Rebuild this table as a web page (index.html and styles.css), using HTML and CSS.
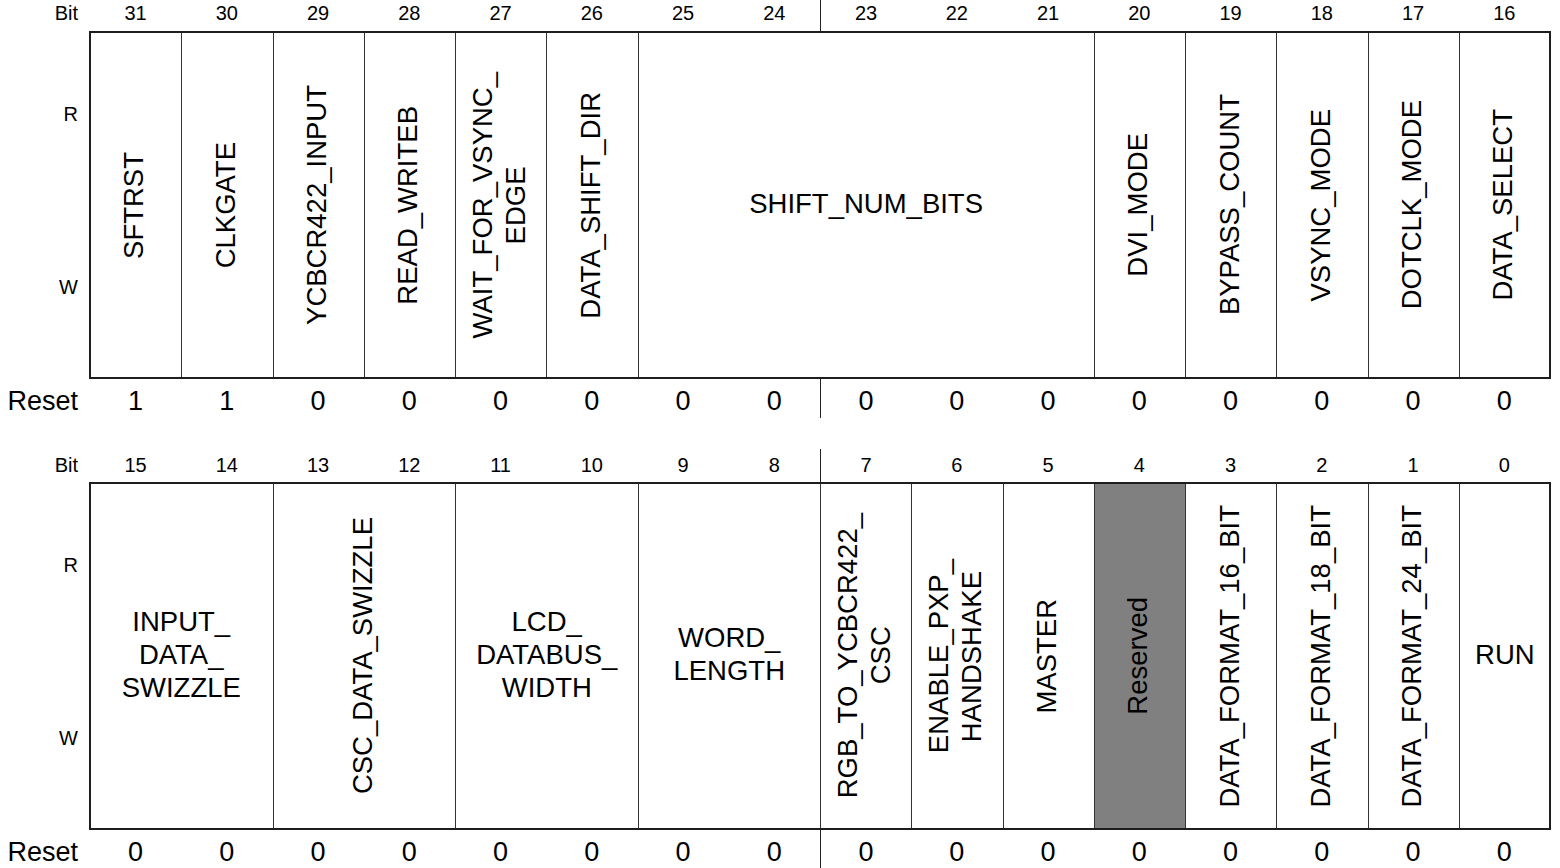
FILE: index.html
```html
<!DOCTYPE html>
<html>
<head>
<meta charset="utf-8">
<link rel="stylesheet" href="styles.css">
</head>
<body>
<div class="page">
  <section class="reg reg-hi">
    <div class="row bits">
      <div class="lbl">Bit</div>
      <div class="cols">
        <span>31</span><span>30</span><span>29</span><span>28</span><span>27</span><span>26</span><span>25</span><span>24</span>
        <span class="div">23</span><span>22</span><span>21</span><span>20</span><span>19</span><span>18</span><span>17</span><span>16</span>
      </div>
    </div>
    <div class="row body">
      <div class="lbl rw"><span>R</span><span>W</span></div>
      <div class="box">
        <div class="f s1"><span class="v">SFTRST</span></div>
        <div class="f s1"><span class="v">CLKGATE</span></div>
        <div class="f s1"><span class="v">YCBCR422_INPUT</span></div>
        <div class="f s1"><span class="v">READ_WRITEB</span></div>
        <div class="f s1"><span class="v">WAIT_FOR_VSYNC_<br>EDGE</span></div>
        <div class="f s1"><span class="v">DATA_SHIFT_DIR</span></div>
        <div class="f s5"><span class="h">SHIFT_NUM_BITS</span></div>
        <div class="f s1"><span class="v">DVI_MODE</span></div>
        <div class="f s1"><span class="v">BYPASS_COUNT</span></div>
        <div class="f s1"><span class="v">VSYNC_MODE</span></div>
        <div class="f s1"><span class="v">DOTCLK_MODE</span></div>
        <div class="f s1"><span class="v">DATA_SELECT</span></div>
      </div>
    </div>
    <div class="row reset">
      <div class="lbl">Reset</div>
      <div class="cols">
        <span>1</span><span>1</span><span>0</span><span>0</span><span>0</span><span>0</span><span>0</span><span>0</span>
        <span class="div">0</span><span>0</span><span>0</span><span>0</span><span>0</span><span>0</span><span>0</span><span>0</span>
      </div>
    </div>
  </section>

  <section class="reg reg-lo">
    <div class="row bits">
      <div class="lbl">Bit</div>
      <div class="cols">
        <span>15</span><span>14</span><span>13</span><span>12</span><span>11</span><span>10</span><span>9</span><span>8</span>
        <span class="div">7</span><span>6</span><span>5</span><span>4</span><span>3</span><span>2</span><span>1</span><span>0</span>
      </div>
    </div>
    <div class="row body">
      <div class="lbl rw"><span>R</span><span>W</span></div>
      <div class="box">
        <div class="f s2"><span class="h">INPUT_<br>DATA_<br>SWIZZLE</span></div>
        <div class="f s2"><span class="v">CSC_DATA_SWIZZLE</span></div>
        <div class="f s2"><span class="h">LCD_<br>DATABUS_<br>WIDTH</span></div>
        <div class="f s2"><span class="h">WORD_<br>LENGTH</span></div>
        <div class="f s1"><span class="v">RGB_TO_YCBCR422_<br>CSC</span></div>
        <div class="f s1"><span class="v">ENABLE_PXP_<br>HANDSHAKE</span></div>
        <div class="f s1"><span class="v">MASTER</span></div>
        <div class="f s1 reserved"><span class="v">Reserved</span></div>
        <div class="f s1"><span class="v">DATA_FORMAT_16_BIT</span></div>
        <div class="f s1"><span class="v">DATA_FORMAT_18_BIT</span></div>
        <div class="f s1"><span class="v">DATA_FORMAT_24_BIT</span></div>
        <div class="f s1"><span class="h">RUN</span></div>
      </div>
    </div>
    <div class="row reset">
      <div class="lbl">Reset</div>
      <div class="cols">
        <span>0</span><span>0</span><span>0</span><span>0</span><span>0</span><span>0</span><span>0</span><span>0</span>
        <span class="div">0</span><span>0</span><span>0</span><span>0</span><span>0</span><span>0</span><span>0</span><span>0</span>
      </div>
    </div>
  </section>
</div>
</body>
</html>
```

FILE: styles.css
```css
html, body {
  margin: 0;
  padding: 0;
  background: #ffffff;
}

body {
  font-family: "Liberation Sans", Arial, Helvetica, sans-serif;
  color: #000000;
  overflow: hidden;
}

.page {
  width: 1550px;
  display: flex;
  flex-direction: column;
}

.reg {
  display: flex;
  flex-direction: column;
}

.reg-lo {
  margin-top: 31px;
}

.row {
  display: flex;
}

.lbl {
  width: 90px;
  flex: 0 0 90px;
  box-sizing: border-box;
  padding-right: 12px;
  text-align: right;
}

.cols {
  flex: 1;
  display: grid;
  grid-template-columns: repeat(16, 1fr);
}

.cols span {
  text-align: center;
}

.cols .div {
  border-left: 1px solid #222;
}

/* Bit row */
.bits .lbl,
.bits .cols span {
  font-size: 20px;
  line-height: 26px;
}

.reg-hi .bits {
  height: 32px;
}

.reg-hi .bits .lbl,
.reg-hi .bits .cols span {
  padding-top: 0;
}

.reg-lo .bits {
  height: 34px;
}

.reg-lo .bits .lbl,
.reg-lo .bits .cols span {
  padding-top: 3px;
}

/* Body row */
.body {
  height: 346px;
}

.rw {
  display: flex;
  flex-direction: column;
  align-items: flex-end;
  padding-top: 70px;
  gap: 149px;
  font-size: 20px;
  line-height: 24px;
}

.box {
  flex: 1;
  display: grid;
  grid-template-columns: repeat(16, 1fr);
  outline: 2px solid #1e1e1e;
  outline-offset: -1px;
}

.f {
  display: flex;
  align-items: center;
  justify-content: center;
  border-left: 1px solid #333;
  font-size: 27.5px;
  line-height: 33px;
  text-align: center;
  overflow: hidden;
}

.f:first-child {
  border-left: none;
}

.s1 { grid-column: span 1; }
.s2 { grid-column: span 2; }
.s5 { grid-column: span 5; }

.v {
  writing-mode: vertical-rl;
  transform: translateX(-2px) rotate(180deg);
  white-space: nowrap;
}

.h {
  white-space: nowrap;
  padding-bottom: 4px;
}

.reserved {
  background: #808080;
}

/* Reset row */
.reset {
  height: 40px;
}

.reset .lbl,
.reset .cols span {
  font-size: 27px;
  line-height: 30px;
  padding-top: 8px;
}
```
